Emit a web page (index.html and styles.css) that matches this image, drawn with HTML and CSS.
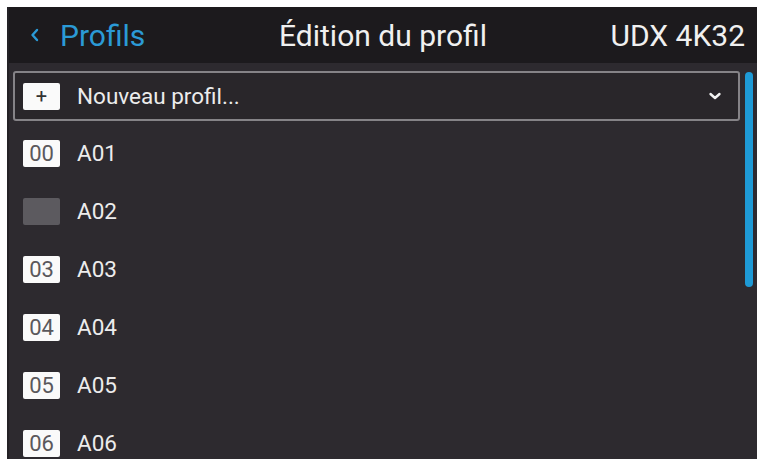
FILE: index.html
```html
<!DOCTYPE html>
<html lang="fr">
<head>
<meta charset="utf-8">
<title>Édition du profil</title>
<link rel="stylesheet" href="styles.css">
</head>
<body>
<div class="frame">
  <header class="header">
    <div class="back">
      <svg class="back-icon" width="12" height="14" viewBox="0 0 12 14"><path d="M8 2 L3.5 7 L8 12" fill="none" stroke="#2b9ad6" stroke-width="2.4" stroke-linecap="round" stroke-linejoin="round"/></svg>
      <span>Profils</span>
    </div>
    <div class="title">Édition du profil</div>
    <div class="device">UDX 4K32</div>
  </header>
  <div class="content">
    <div class="main">
      <div class="dropdown">
        <span class="badge plus">+</span>
        <span class="label">Nouveau profil...</span>
        <svg class="caret" width="14" height="10" viewBox="0 0 14 10"><path d="M2.5 3 L7 7 L11.5 3" fill="none" stroke="#f2f2f2" stroke-width="2.4" stroke-linecap="round" stroke-linejoin="round"/></svg>
      </div>
      <ul class="list">
        <li class="row"><span class="badge">00</span><span class="label">A01</span></li>
        <li class="row"><span class="badge empty"></span><span class="label">A02</span></li>
        <li class="row"><span class="badge">03</span><span class="label">A03</span></li>
        <li class="row"><span class="badge">04</span><span class="label">A04</span></li>
        <li class="row"><span class="badge">05</span><span class="label">A05</span></li>
        <li class="row"><span class="badge">06</span><span class="label">A06</span></li>
      </ul>
    </div>
    <div class="scrollbar"></div>
  </div>
</div>
</body>
</html>
```
FILE: styles.css
```css
html, body {
  margin: 0;
  padding: 0;
  background: #ffffff;
  height: 100%;
  overflow: hidden;
}
body {
  font-family: Roboto, "Liberation Sans", sans-serif;
}
.frame {
  margin: 7px 0 0 7px;
  width: 750px;
  height: 452px;
  background: #2d2a2f;
  border-left: 2px solid #242226;
  box-sizing: border-box;
  overflow: hidden;
  display: flex;
  flex-direction: column;
}
.header {
  height: 56px;
  flex: none;
  background: #1c1a1d;
  display: grid;
  grid-template-columns: 1fr auto 1fr;
  align-items: center;
  padding: 0 12px;
}
.back {
  display: flex;
  align-items: center;
  color: #2b9ad6;
  font-size: 30px;
  margin-left: 8px;
}
.back-icon {
  margin-right: 19px;
}
.title {
  color: #f0f0f0;
  font-size: 30px;
}
.device {
  color: #f0f0f0;
  font-size: 30px;
  justify-self: end;
}
.content {
  flex: 1;
  display: flex;
}
.main {
  width: 731px;
  padding: 8px 0 0 4px;
  box-sizing: border-box;
}
.dropdown {
  height: 50px;
  box-sizing: border-box;
  border: 2px solid #858387;
  border-radius: 3px;
  background: #29262a;
  display: flex;
  align-items: center;
  padding: 0 16px 0 8px;
}
.dropdown .label {
  flex: 1;
}
.badge {
  width: 37px;
  height: 27px;
  box-sizing: border-box;
  background: #fafafa;
  border-radius: 2px;
  color: #5a585c;
  font-size: 22px;
  display: flex;
  align-items: center;
  justify-content: center;
  margin-right: 17px;
  flex: none;
}
.badge.plus {
  color: #333;
  font-size: 20px;
}
.badge.empty {
  background: #5c5a5f;
}
.label {
  color: #ececec;
  font-size: 22.5px;
}
.list {
  list-style: none;
  margin: 3px 0 0 0;
  padding: 0 0 0 10px;
}
.row {
  height: 58px;
  display: flex;
  align-items: center;
}
.scrollbar {
  width: 8px;
  height: 215px;
  margin: 9px 0 0 5px;
  background: #1e9ad6;
  border-radius: 4px;
}
```
